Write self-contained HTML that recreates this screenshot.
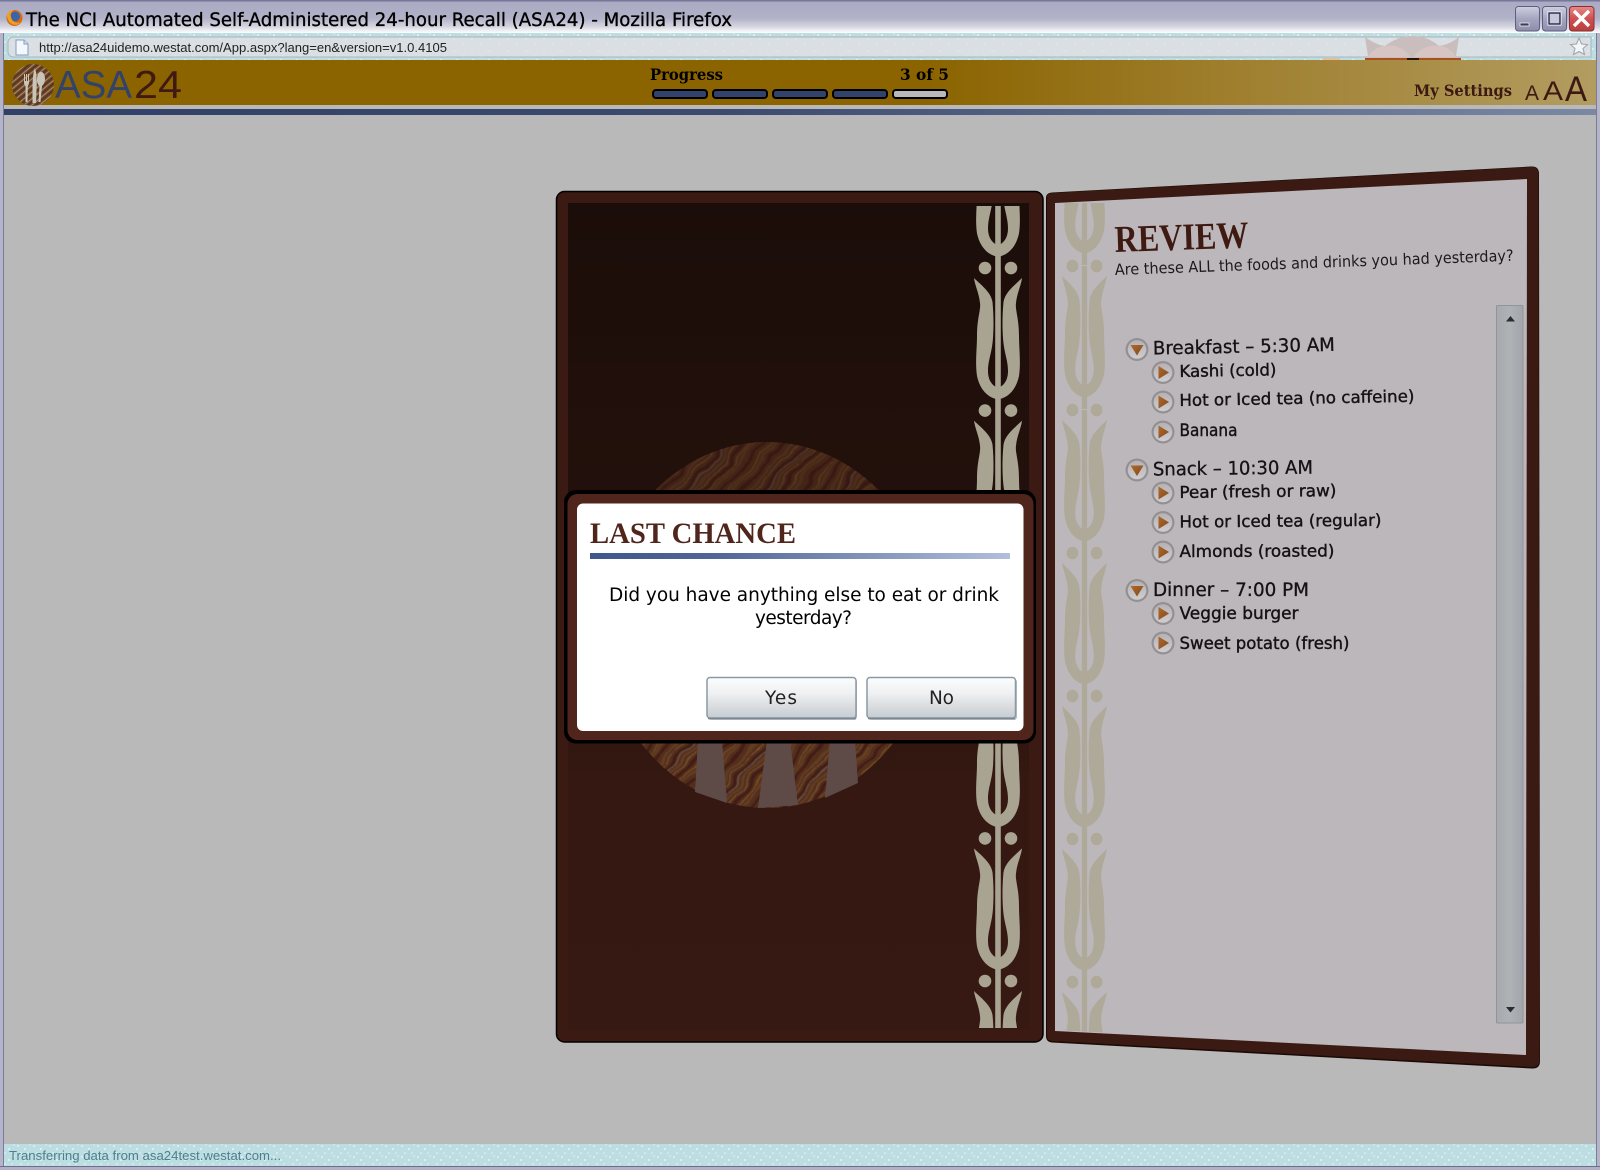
<!DOCTYPE html>
<html lang="en"><head><meta charset="utf-8"><title>ASA24</title>
<style>html,body{margin:0;padding:0;width:1600px;height:1170px;overflow:hidden;background:#b9b9b9}svg{display:block}
.s{font-family:"DejaVu Sans",sans-serif}.l{font-family:"Liberation Sans",sans-serif}.f{font-family:"Liberation Serif",serif;font-weight:bold}.d{font-family:"DejaVu Serif",serif}.b{filter:blur(.35px)}</style></head>
<body>
<svg xmlns="http://www.w3.org/2000/svg" width="1600" height="1170" viewBox="0 0 1600 1170">
<defs>
<linearGradient id="tb" x1="0" y1="0" x2="0" y2="1"><stop offset="0" stop-color="#a9a9c2"/><stop offset=".55" stop-color="#b1b1c8"/><stop offset=".8" stop-color="#d4d4e0"/><stop offset="1" stop-color="#fff"/></linearGradient>
<linearGradient id="hd" x1="0" y1="0" x2="1" y2="0"><stop offset="0" stop-color="#8b6400"/><stop offset=".58" stop-color="#8b6400"/><stop offset=".78" stop-color="#a08030"/><stop offset="1" stop-color="#b29c60"/></linearGradient>
<linearGradient id="bl" x1="0" y1="0" x2="1" y2="0"><stop offset="0" stop-color="#314068"/><stop offset=".45" stop-color="#3c4a70"/><stop offset="1" stop-color="#7a88a4"/></linearGradient>
<linearGradient id="ru" x1="0" y1="0" x2="1" y2="0"><stop offset="0" stop-color="#40578a"/><stop offset=".3" stop-color="#4f6696"/><stop offset="1" stop-color="#b2bfdb"/></linearGradient>
<linearGradient id="ld" x1="0" y1="0" x2="0" y2="1"><stop offset="0" stop-color="#1b0d09"/><stop offset=".4" stop-color="#24110c"/><stop offset=".7" stop-color="#341811"/><stop offset="1" stop-color="#361912"/></linearGradient>
<linearGradient id="bt" x1="0" y1="0" x2="0" y2="1"><stop offset="0" stop-color="#fcfdfd"/><stop offset=".4" stop-color="#eef0f1"/><stop offset="1" stop-color="#c6ccd1"/></linearGradient>
<linearGradient id="sb" x1="0" y1="0" x2="1" y2="0"><stop offset="0" stop-color="#a6aaae"/><stop offset=".5" stop-color="#afb3b6"/><stop offset="1" stop-color="#a2a6aa"/></linearGradient>
<linearGradient id="wb" x1="0" y1="0" x2="0" y2="1"><stop offset="0" stop-color="#cfcfe0"/><stop offset=".5" stop-color="#a5a5c0"/><stop offset="1" stop-color="#8d8dab"/></linearGradient>
<linearGradient id="wc" x1="0" y1="0" x2="0" y2="1"><stop offset="0" stop-color="#e88a8a"/><stop offset=".5" stop-color="#d05050"/><stop offset="1" stop-color="#b84040"/></linearGradient>
<linearGradient id="tr" x1="0" y1="0" x2="1" y2="1"><stop offset="0" stop-color="#b06a2c"/><stop offset="1" stop-color="#80481c"/></linearGradient>
<linearGradient id="ig" x1="0" y1="0" x2="0" y2="1"><stop offset="0" stop-color="#b5b1b4"/><stop offset="1" stop-color="#d0cdd0"/></linearGradient>
<pattern id="dt" width="16" height="11" patternUnits="userSpaceOnUse"><rect width="16" height="11" fill="#bcdde2"/><circle cx="2" cy="2" r=".9" fill="#eef8f8"/><circle cx="9" cy="5" r=".9" fill="#f2fafa"/><circle cx="14" cy="1" r=".7" fill="#e2f2f4"/><circle cx="5" cy="9" r=".8" fill="#f2fafa"/><circle cx="12" cy="9" r=".7" fill="#e6f4f5"/></pattern>
<pattern id="dg" width="18" height="12" patternUnits="userSpaceOnUse"><rect width="18" height="12" fill="#d9dfe2"/><circle cx="4" cy="3" r="1" fill="#e2e7ea"/><circle cx="13" cy="8" r="1" fill="#e2e7ea"/></pattern>
<pattern id="sc" width="58" height="58" patternUnits="userSpaceOnUse" patternTransform="rotate(-48)">
<rect width="58" height="58" fill="#522e1c"/>
<path d="M0 4H58M0 15H58M0 31H58M0 46H58" stroke="#633c24" stroke-width="2.600"/>
<path d="M0 9H58M0 24H58M0 39H58M0 53H58" stroke="#431f14" stroke-width="3"/>
<path d="M0 19H58M0 35H58" stroke="#7a5430" stroke-width="1"/>
<path d="M0 27H58" stroke="#6a5a50" stroke-width="1"/>
<path d="M0 1H58M0 43H58" stroke="#7c5226" stroke-width="1"/>
</pattern>
<filter id="wv" x="-5%" y="-5%" width="110%" height="110%"><feTurbulence type="fractalNoise" baseFrequency=".03 .05" numOctaves="2" seed="7" result="n"/><feDisplacementMap in="SourceGraphic" in2="n" scale="9"/><feGaussianBlur stdDeviation=".5"/></filter>
<pattern id="sl" width="10" height="10" patternUnits="userSpaceOnUse" patternTransform="rotate(-40)">
<rect width="10" height="10" fill="#70482a"/><path d="M0 1H10M0 6H10" stroke="#a8906e" stroke-width="1"/><path d="M0 3.500H10M0 8.500H10" stroke="#543020" stroke-width="1.200"/>
</pattern>
<g id="un">
<rect x="-2.800" y="0" width="5.600" height="143"/>
<circle cx="-13" cy="0" r="6.300"/><circle cx="13" cy="0" r="6.300"/>
<path d="M-24 10C-17 17-7 24-5.500 34C-4 50-4.500 62-5 70C-6 85-10 92-10 103C-10 112-6 117-2 119L-2 131C-10 129-18 122-21 108C-23 95-21 80-21 68C-21 50-17 42-18 35C-19 25-23 18-24 10Z"/>
<path d="M24 10C17 17 7 24 5.500 34C4 50 4.500 62 5 70C6 85 10 92 10 103C10 112 6 117 2 119L2 131C10 129 18 122 21 108C23 95 21 80 21 68C21 50 17 42 18 35C19 25 23 18 24 10Z"/>
</g>
<g id="ic"><circle r="11.500" fill="#929092"/><circle r="9.300" fill="url(#ig)"/></g>
<path id="td" d="M-6.500 -4.500H6.500L0 6Z" fill="url(#tr)"/>
<path id="tg" d="M-4.500 -6.500L6 0L-4.500 6.500Z" fill="url(#tr)"/>
<clipPath id="cl"><rect x="960" y="206" width="80" height="822"/></clipPath>
<clipPath id="cr"><path d="M1056 203H1115V1033L1056 1030Z"/></clipPath>
<clipPath id="ce"><ellipse cx="767" cy="625" rx="165" ry="183"/></clipPath>
</defs>

<!-- window chrome -->
<rect width="1600" height="1170" fill="#b9b9b9"/>
<rect x="0" y="0" width="1600" height="33" fill="url(#tb)"/>
<rect x="0" y="0" width="1600" height="1.500" fill="#77779a"/>
<rect x="0" y="33" width="1600" height="27" fill="url(#dt)"/>
<path d="M8 43Q8 37 14 37H1591V57H14Q8 57 8 51Z" fill="url(#dg)" stroke="#a9b7bc"/>
<!-- fox watermark -->
<path d="M1365 37C1372 42 1378 45 1385 46C1395 38 1405 36 1412 36C1420 36 1430 38 1439 46C1446 45 1453 42 1459 37L1456 56L1461 58H1365L1368 56Z" fill="#c9bdbd"/>
<path d="M1368 57C1372 48 1385 44 1395 46C1402 48 1408 52 1410 57ZM1456 57C1452 48 1440 44 1430 46C1423 48 1416 52 1414 57Z" fill="#d6c5c2"/>
<rect x="1365" y="58" width="96" height="2" fill="#a8501e"/><rect x="1407" y="58" width="12" height="2" fill="#2a1408"/>
<rect x="1323" y="58" width="17" height="2" fill="#e0c0a0"/>
<!-- firefox icon -->
<circle cx="14.500" cy="18" r="8" fill="#d86a14"/><circle cx="15" cy="16.500" r="5" fill="#3c64a8"/><path d="M7 16C8 24 16 28 21 22C17 24 12 22 11 17C10 14 12 11 14 10C10 10 7 12 7 16Z" fill="#f0a020"/>
<text class="s" x="26" y="26" font-size="19" fill="#000" textLength="706" lengthAdjust="spacingAndGlyphs" stroke="#000" stroke-width=".35">The NCI Automated Self-Administered 24-hour Recall (ASA24) - Mozilla Firefox</text>
<!-- window buttons -->
<rect x="1515.500" y="6.500" width="24" height="24.500" rx="3" fill="url(#wb)" stroke="#5c5f80"/><rect x="1520" y="23" width="9" height="3" fill="#3a3d5c" stroke="#fff" stroke-width=".7"/>
<rect x="1542.500" y="6.500" width="24" height="24.500" rx="3" fill="url(#wb)" stroke="#5c5f80"/><rect x="1548" y="12" width="13" height="13" fill="none" stroke="#fff" stroke-width="1"/><rect x="1549" y="13" width="11" height="11" fill="#c8c8da" stroke="#23264a" stroke-width="1.400"/>
<rect x="1569.500" y="6.500" width="24.500" height="24.500" rx="3" fill="url(#wc)" stroke="#8a2d30"/><path d="M1574 11L1589 26M1589 11L1574 26" stroke="#fff" stroke-width="3.400"/>
<!-- page icon + url -->
<path d="M16 40H24L28 44V55H16Z" fill="#f4f8fc" stroke="#7e9cc4"/><path d="M24 40V44H28" fill="#d6e4f2" stroke="#7e9cc4"/>
<text class="l" x="39" y="52" font-size="13" fill="#222" textLength="408" lengthAdjust="spacingAndGlyphs">http://asa24uidemo.westat.com/App.aspx?lang=en&amp;version=v1.0.4105</text>
<path d="M1579 38L1581.500 44L1587.500 44.500L1583 48.500L1584.500 54.500L1579 51.500L1573.500 54.500L1575 48.500L1570.500 44.500L1576.500 44Z" fill="#f4f5f6" stroke="#9aa4aa"/>

<!-- app header -->
<rect x="4" y="60" width="1592" height="45" fill="url(#hd)"/>
<rect x="4" y="105" width="1592" height="4" fill="#b9b9b9"/>
<rect x="4" y="109" width="1592" height="6" fill="url(#bl)"/>
<!-- logo -->
<circle cx="33" cy="85" r="21" fill="url(#sl)"/>
<g fill="#c9c5b9"><path d="M24 74L25 74V81H26V74H27V81H28V74H29V82Q29 85 27.800 86L27.500 102H25.500L25.500 86Q24 85 24 82Z"/><path d="M35 68C37 74 37 84 36.500 90L36 103H32.500L32.500 84C33 78 33 72 35 68Z"/><path d="M41 72C44 72 45 76 45 79C45 83 43 85 42 86L40.500 102H38.500L39.500 86C38 85 37 83 37 79C37 76 38.500 72 41 72Z"/></g>
<text class="l" x="55" y="98" font-size="39" fill="#33426a" textLength="77" lengthAdjust="spacingAndGlyphs">ASA</text>
<text class="l" x="134" y="98" font-size="39" fill="#401a12" textLength="48" lengthAdjust="spacingAndGlyphs">24</text>
<!-- progress -->
<text class="d" x="650" y="80" font-size="16" font-weight="bold" fill="#000" textLength="73" lengthAdjust="spacingAndGlyphs">Progress</text>
<text class="d" x="900" y="80" font-size="16" font-weight="bold" fill="#000" textLength="49" lengthAdjust="spacingAndGlyphs">3 of 5</text>
<g stroke="#000" stroke-width="2" fill="#33426a"><rect x="653" y="90" width="54" height="8" rx="3"/><rect x="713" y="90" width="54" height="8" rx="3"/><rect x="773" y="90" width="54" height="8" rx="3"/><rect x="833" y="90" width="54" height="8" rx="3"/><rect x="893" y="90" width="54" height="8" rx="3" fill="#b9b9b9"/></g>
<text class="d" x="1414" y="96" font-size="16" font-weight="bold" fill="#3a1a12" textLength="98" lengthAdjust="spacingAndGlyphs">My Settings</text>
<text class="l" x="1525" y="100" font-size="21" fill="#3a1a12" textLength="14" lengthAdjust="spacingAndGlyphs">A</text>
<text class="l" x="1543" y="100" font-size="27" fill="#3a1a12" textLength="20" lengthAdjust="spacingAndGlyphs">A</text>
<text class="l" x="1565" y="101" font-size="35" fill="#3a1a12" textLength="22" lengthAdjust="spacingAndGlyphs">A</text>

<!-- left menu panel -->
<rect x="556.500" y="191.500" width="486.500" height="850.500" rx="8" fill="#3a1a12" stroke="#000" stroke-width="1.500"/>
<rect x="568" y="203" width="461" height="827" fill="url(#ld)"/>
<g clip-path="url(#ce)">
<rect x="580" y="420" width="380" height="410" fill="url(#sc)" filter="url(#wv)"/>
<rect x="580" y="420" width="380" height="200" fill="#24110c" opacity=".35"/>
</g>
<g fill="#5e4a46"><path d="M698 740H722L727 803L695 792Z"/><path d="M767 740H790L798 805L758 808Z"/><path d="M830 740H855L858 783L825 798Z"/></g>
<g fill="#a9a391" clip-path="url(#cl)">
<use href="#un" x="998" y="125.400"/><use href="#un" x="998" y="268"/><use href="#un" x="998" y="410.600"/><use href="#un" x="998" y="553.200"/><use href="#un" x="998" y="695.800"/><use href="#un" x="998" y="838.400"/><use href="#un" x="998" y="981"/>
</g>

<!-- right review panel -->
<path d="M1052 192.500L1531 166.500Q1538.500 166 1539 173L1540 1061Q1540 1069 1532 1068.500L1052 1042.500Q1046 1042 1046 1036V198Q1046 193 1052 192.500Z" fill="#1a0a06"/>
<path d="M1052 193L1531 167Q1538 166.500 1538.500 173L1539.500 1060Q1539.500 1067 1532 1067L1052 1041Q1047 1040.500 1047 1036V198Q1047 193.500 1052 193Z" fill="#3a1a12"/>
<path d="M1055 203L1527 179L1526 1055L1055 1031Z" fill="#bcb7bb"/>
<g fill="#aea998" clip-path="url(#cr)" class="b">
<use href="#un" transform="translate(1084.500 122) scale(.93 1)"/><use href="#un" transform="translate(1084.500 266) scale(.93 1)"/><use href="#un" transform="translate(1084.500 410) scale(.93 1)"/><use href="#un" transform="translate(1084.500 553) scale(.93 1)"/><use href="#un" transform="translate(1084.500 696) scale(.93 1)"/><use href="#un" transform="translate(1084.500 839) scale(.93 1)"/><use href="#un" transform="translate(1084.500 982) scale(.93 1)"/>
</g>
<rect x="1496.500" y="305.500" width="26.500" height="717.500" rx="1" fill="url(#sb)" stroke="#8f9599"/>
<path d="M1510.500 316L1515 321.500H1506Z" fill="#2c2c30"/><path d="M1506 1007H1515L1510.500 1012.500Z" fill="#2c2c30"/>

<g class="b">
<text class="f" transform="rotate(-2 1115 252)" x="1115" y="252" font-size="38" fill="#3f1a12" textLength="134" lengthAdjust="spacingAndGlyphs">REVIEW</text>
<text class="s" transform="rotate(-2.050 1115 275)" x="1115" y="275" font-size="15.500" fill="#1e1a1c" textLength="399" lengthAdjust="spacingAndGlyphs">Are these ALL the foods and drinks you had yesterday?</text>
<g fill="#141214" class="s" stroke="#141214" stroke-width=".3">
<text transform="rotate(-1.150 1153 354)" x="1153" y="354.500" font-size="18.500" textLength="182" lengthAdjust="spacingAndGlyphs">Breakfast – 5:30 AM</text>
<text transform="rotate(-1 1179.500 377)" x="1179.500" y="377" font-size="16.500" textLength="97" lengthAdjust="spacingAndGlyphs" stroke-width=".4">Kashi (cold)</text>
<text transform="rotate(-1.050 1179.500 406)" x="1179.500" y="406" font-size="16.500" textLength="235" lengthAdjust="spacingAndGlyphs" stroke-width=".4">Hot or Iced tea (no caffeine)</text>
<text x="1179.500" y="436" font-size="16.500" textLength="58" lengthAdjust="spacingAndGlyphs" stroke-width=".4">Banana</text>
<text transform="rotate(-.7 1153 475)" x="1153" y="475.500" font-size="18.500" textLength="160" lengthAdjust="spacingAndGlyphs">Snack – 10:30 AM</text>
<text transform="rotate(-.7 1179.500 498)" x="1179.500" y="498" font-size="16.500" textLength="157" lengthAdjust="spacingAndGlyphs" stroke-width=".4">Pear (fresh or raw)</text>
<text transform="rotate(-.5 1179.500 527)" x="1179.500" y="527.500" font-size="16.500" textLength="202" lengthAdjust="spacingAndGlyphs" stroke-width=".4">Hot or Iced tea (regular)</text>
<text transform="rotate(-.2 1179.500 557)" x="1179.500" y="557" font-size="16.500" textLength="155" lengthAdjust="spacingAndGlyphs" stroke-width=".4">Almonds (roasted)</text>
<text x="1153" y="596" font-size="18.500" textLength="156" lengthAdjust="spacingAndGlyphs">Dinner – 7:00 PM</text>
<text x="1179.500" y="619" font-size="16.500" textLength="119" lengthAdjust="spacingAndGlyphs" stroke-width=".4">Veggie burger</text>
<text x="1179.500" y="649" font-size="16.500" textLength="170" lengthAdjust="spacingAndGlyphs" stroke-width=".4">Sweet potato (fresh)</text>
</g>
<!-- tree icons -->
<use href="#ic" x="1137" y="349.500"/><use href="#td" x="1137" y="349.500"/>
<use href="#ic" x="1137" y="470"/><use href="#td" x="1137" y="470"/>
<use href="#ic" x="1137" y="590.500"/><use href="#td" x="1137" y="590.500"/>
<use href="#ic" x="1163" y="372.500"/><use href="#tg" x="1163" y="372.500"/>
<use href="#ic" x="1163" y="402"/><use href="#tg" x="1163" y="402"/>
<use href="#ic" x="1163" y="432"/><use href="#tg" x="1163" y="432"/>
<use href="#ic" x="1163" y="493"/><use href="#tg" x="1163" y="493"/>
<use href="#ic" x="1163" y="522.500"/><use href="#tg" x="1163" y="522.500"/>
<use href="#ic" x="1163" y="552"/><use href="#tg" x="1163" y="552"/>
<use href="#ic" x="1163" y="613.500"/><use href="#tg" x="1163" y="613.500"/>
<use href="#ic" x="1163" y="643"/><use href="#tg" x="1163" y="643"/>
</g>

<!-- dialog -->
<rect x="564" y="490" width="472" height="253.500" rx="12" fill="#000"/>
<rect x="567.500" y="494" width="466" height="246" rx="10" fill="#50251c"/>
<rect x="577" y="503.500" width="446.500" height="227.500" rx="6" fill="#fff"/>
<text class="f" x="590" y="543" font-size="30" fill="#50251c" textLength="206" lengthAdjust="spacingAndGlyphs">LAST CHANCE</text>
<rect x="590" y="553" width="420" height="6" fill="url(#ru)"/>
<text class="s" x="609" y="601" font-size="18.500" fill="#000" textLength="390" lengthAdjust="spacing">Did you have anything else to eat or drink</text>
<text class="s" x="755" y="624" font-size="18.500" fill="#000" textLength="97" lengthAdjust="spacing">yesterday?</text>
<rect x="708" y="679" width="149" height="41" rx="3" fill="#b8bec4"/>
<rect x="868" y="679" width="149" height="41" rx="3" fill="#b8bec4"/>
<rect x="707" y="677.500" width="149" height="40.500" rx="3" fill="url(#bt)" stroke="#8c99a5" stroke-width="1.500"/>
<path d="M708 718.500H856" stroke="#7b8892" stroke-width="1.500"/>
<rect x="867" y="677.500" width="148.500" height="40.500" rx="3" fill="url(#bt)" stroke="#8c99a5" stroke-width="1.500"/>
<path d="M868 718.500H1015" stroke="#7b8892" stroke-width="1.500"/>
<text class="s" x="765" y="704" font-size="18.500" fill="#222" textLength="32" lengthAdjust="spacing">Yes</text>
<text class="s" x="929" y="704" font-size="18.500" fill="#222" textLength="25" lengthAdjust="spacing">No</text>

<!-- status bar -->
<rect x="0" y="1144" width="1600" height="22" fill="url(#dt)"/>
<text class="l" x="9" y="1160" font-size="12.500" fill="#4e7f8c" textLength="272" lengthAdjust="spacingAndGlyphs">Transferring data from asa24test.westat.com...</text>
<!-- window borders -->
<rect x="0" y="33" width="3" height="1137" fill="#b5b5c9"/><rect x="3" y="33" width="1" height="1133" fill="#7b7b99"/>
<rect x="1597" y="33" width="3" height="1137" fill="#b5b5c9"/><rect x="1596" y="33" width="1" height="1133" fill="#7b7b99"/>
<rect x="0" y="1166" width="1600" height="1" fill="#6d6d8c"/><rect x="0" y="1167" width="1600" height="3" fill="#b0b0c6"/>
</svg>
</body></html>
